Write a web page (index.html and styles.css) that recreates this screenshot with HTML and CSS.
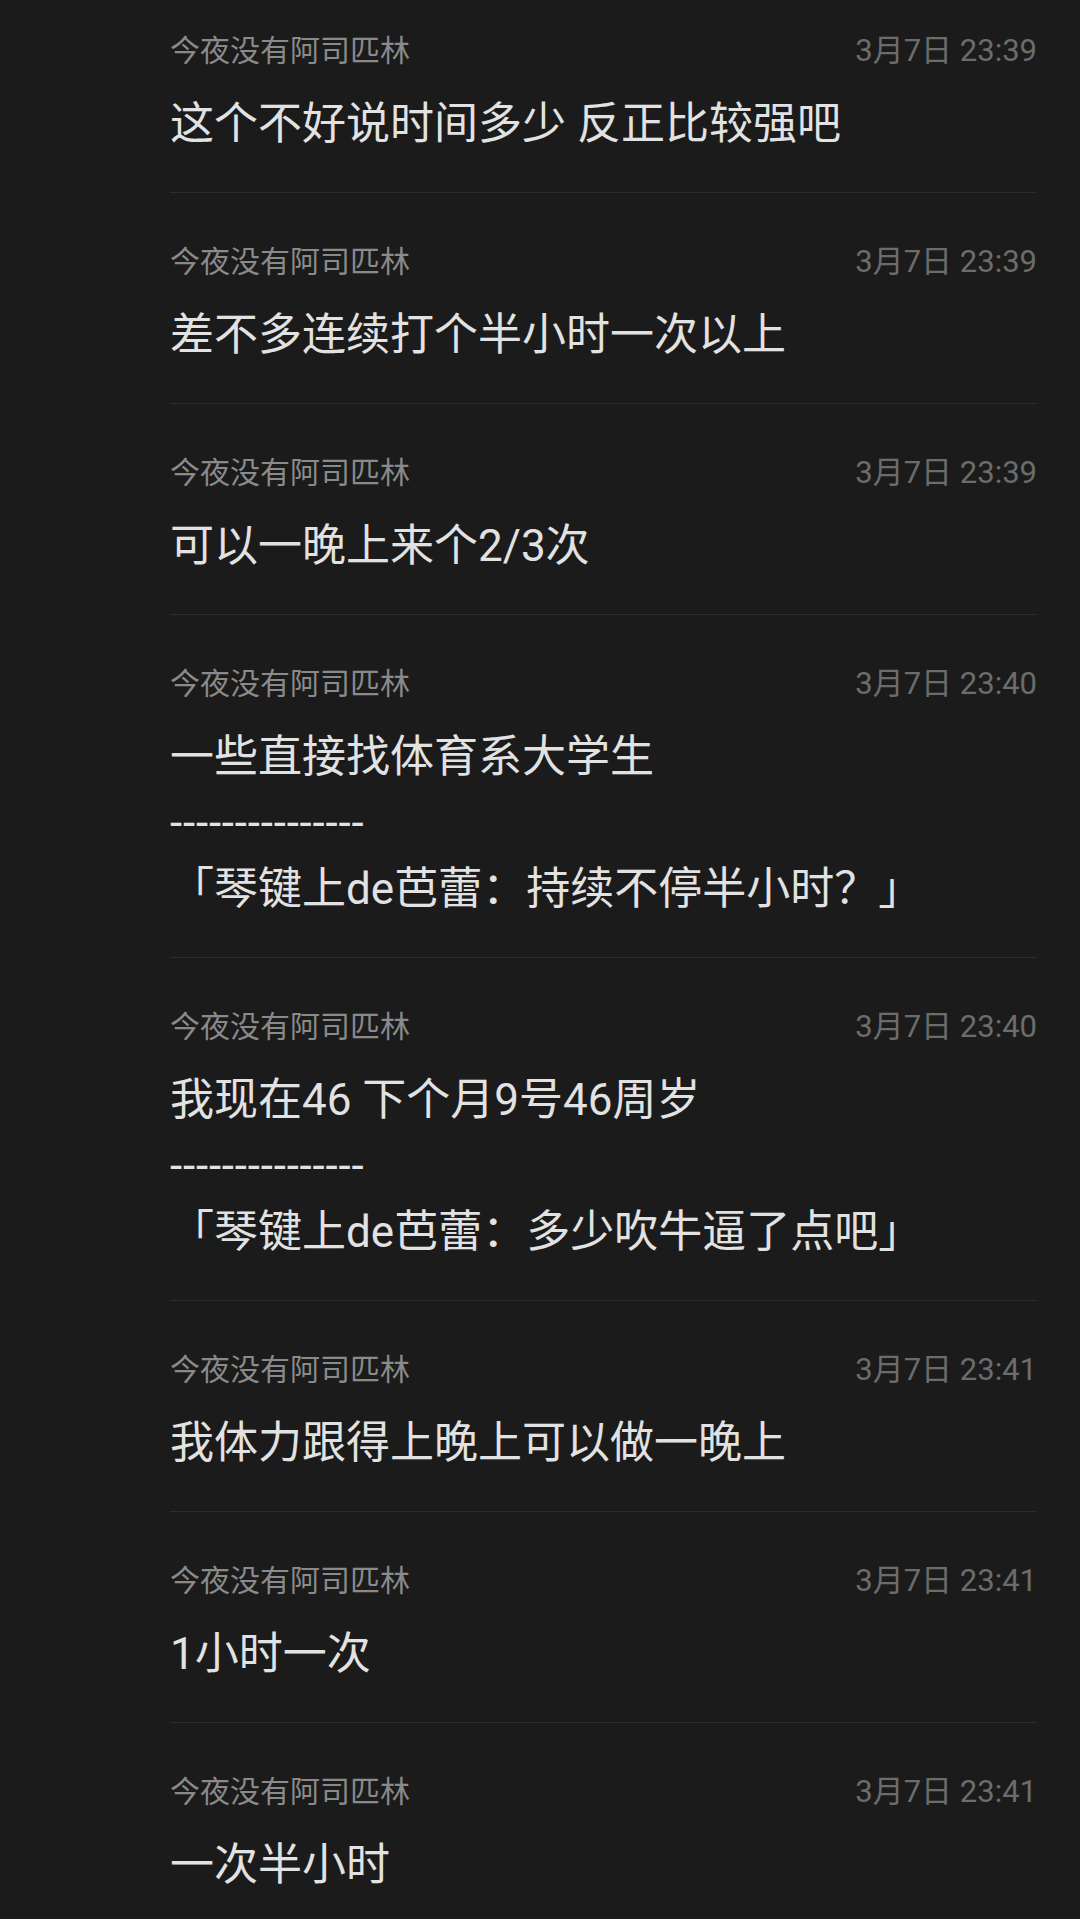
FILE: index.html
```html
<!DOCTYPE html>
<html lang="zh-CN">
<head>
	<meta charset="UTF-8">
	<title>聊天记录</title>
<link rel="stylesheet" href="styles.css">
</head>
<body>
<div class="list">
	<div class="item">
		<div class="meta"><span class="name">今夜没有阿司匹林</span><span class="time">3月7日 23:39</span></div>
		<p class="msg">这个不好说时间多少 反正比较强吧</p>
	</div>
	<div class="item">
		<div class="meta"><span class="name">今夜没有阿司匹林</span><span class="time">3月7日 23:39</span></div>
		<p class="msg">差不多连续打个半小时一次以上</p>
	</div>
	<div class="item">
		<div class="meta"><span class="name">今夜没有阿司匹林</span><span class="time">3月7日 23:39</span></div>
		<p class="msg">可以一晚上来个2/3次</p>
	</div>
	<div class="item">
		<div class="meta"><span class="name">今夜没有阿司匹林</span><span class="time">3月7日 23:40</span></div>
		<p class="msg">一些直接找体育系大学生<br><span class="dash">---------------</span><br>「琴键上de芭蕾：持续不停半小时？」</p>
	</div>
	<div class="item">
		<div class="meta"><span class="name">今夜没有阿司匹林</span><span class="time">3月7日 23:40</span></div>
		<p class="msg">我现在46 下个月9号46周岁<br><span class="dash">---------------</span><br>「琴键上de芭蕾：多少吹牛逼了点吧」</p>
	</div>
	<div class="item">
		<div class="meta"><span class="name">今夜没有阿司匹林</span><span class="time">3月7日 23:41</span></div>
		<p class="msg">我体力跟得上晚上可以做一晚上</p>
	</div>
	<div class="item">
		<div class="meta"><span class="name">今夜没有阿司匹林</span><span class="time">3月7日 23:41</span></div>
		<p class="msg">1小时一次</p>
	</div>
	<div class="item">
		<div class="meta"><span class="name">今夜没有阿司匹林</span><span class="time">3月7日 23:41</span></div>
		<p class="msg">一次半小时</p>
	</div>
</div>
</body>
</html>
```

FILE: styles.css
```css
	html, body{
		margin: 0;
		background-color: #1b1b1b;
		overflow: hidden;
	}
	body{
		font-family: Roboto, "Noto Sans CJK SC", sans-serif;
	}
	.list{
		margin-top: -18px;
		padding: 0 43px 0 170px;
	}
	.item{
		padding: 45px 0 35px;
		border-bottom: 1px solid #2c2c2c;
	}
	.meta{
		display: flex;
		justify-content: space-between;
		align-items: baseline;
		height: 48px;
		line-height: 48px;
	}
	.name{
		font-size: 30px;
		color: #8a8a8a;
	}
	.time{
		font-size: 31px;
		color: #6c6c6c;
	}
	.msg{
		margin: 16px 0 0;
		font-size: 44px;
		line-height: 66px;
		color: #e2e2e2;
	}
	.dash{
		letter-spacing: 0.8px;
	}
```
